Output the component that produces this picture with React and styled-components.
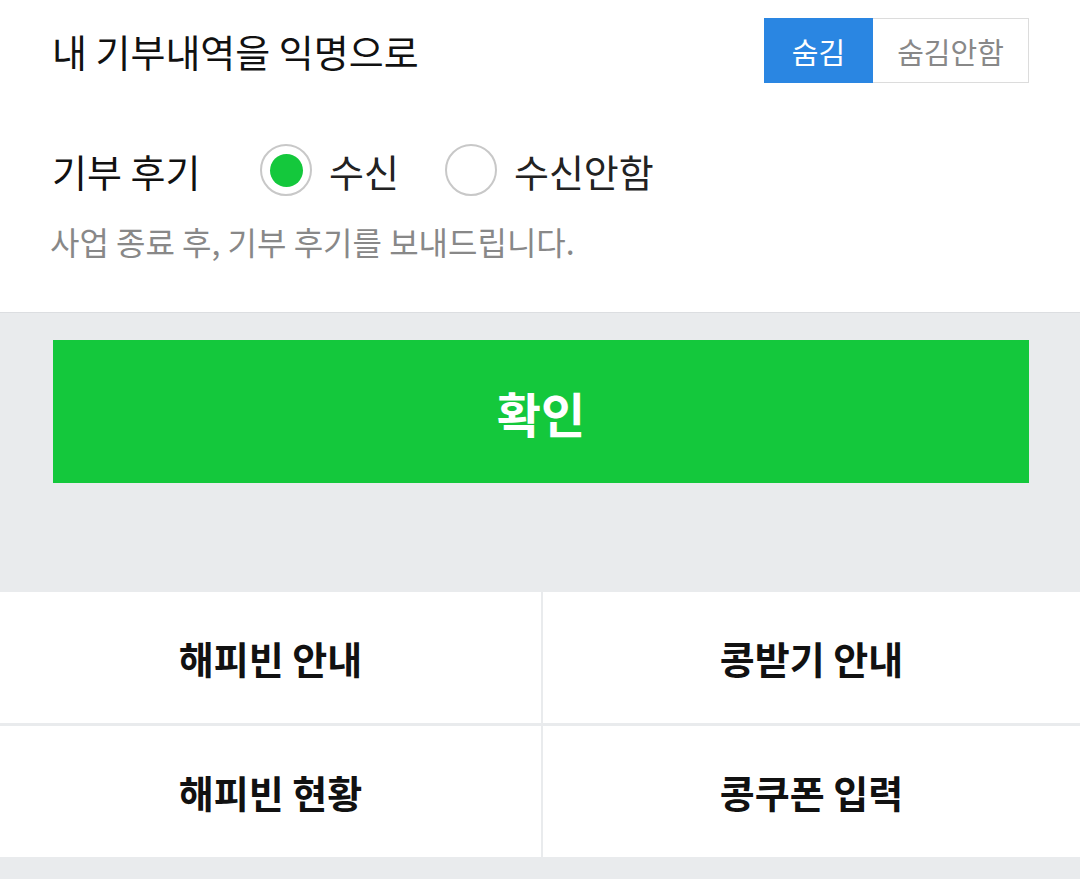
import React, { useState } from "react";
import styled, { createGlobalStyle } from "styled-components";

const GlobalStyle = createGlobalStyle`
  body {
    margin: 0;
    background: #e9ebed;
    font-family: "Noto Sans CJK KR", "Noto Sans", sans-serif;
  }
`;

function App() {
  const [hidden, setHidden] = useState(true);
  const [review, setReview] = useState(true);

  return (
    <Page>
      <GlobalStyle />
      <Settings>
        <TopRow>
          <Title>내 기부내역을 익명으로</Title>
          <Toggle>
            <ToggleButton active={hidden} onClick={() => setHidden(true)}>
              숨김
            </ToggleButton>
            <ToggleButton active={!hidden} onClick={() => setHidden(false)}>
              숨김안함
            </ToggleButton>
          </Toggle>
        </TopRow>

        <RadioRow>
          <Label>기부 후기</Label>
          <Option onClick={() => setReview(true)}>
            <Radio checked={review} />
            수신
          </Option>
          <Option onClick={() => setReview(false)}>
            <Radio checked={!review} />
            수신안함
          </Option>
        </RadioRow>
        <Hint>사업 종료 후, 기부 후기를 보내드립니다.</Hint>
      </Settings>

      <Footer>
        <Confirm>확인</Confirm>
      </Footer>

      <Menu>
        <MenuItem>해피빈 안내</MenuItem>
        <MenuItem>콩받기 안내</MenuItem>
        <MenuItem>해피빈 현황</MenuItem>
        <MenuItem>콩쿠폰 입력</MenuItem>
      </Menu>
    </Page>
  );
}

const Page = styled.div`
  width: 1080px;
  min-height: 879px;
  background: #e9ebed;
`;

const Settings = styled.section`
  background: #fff;
  padding: 18px 51px 0 52px;
  height: 294px;
  border-bottom: 1px solid #dcdee1;
`;

const TopRow = styled.div`
  display: flex;
  align-items: center;
  justify-content: space-between;
`;

const Title = styled.h2`
  margin: 0;
  font-size: 38px;
  font-weight: 400;
  color: #111;
`;

const Toggle = styled.div`
  display: flex;
  height: 65px;
`;

const ToggleButton = styled.button`
  font-family: inherit;
  font-size: 29px;
  padding: 0;
  cursor: pointer;
  border: 1px solid ${(p) => (p.active ? "#2a86e2" : "#dcdcdc")};
  background: ${(p) => (p.active ? "#2a86e2" : "#fff")};
  color: ${(p) => (p.active ? "#fff" : "#888")};
  & + & {
    border-left: none;
  }
  &:first-child {
    width: 109px;
  }
  &:last-child {
    width: 156px;
  }
`;

const RadioRow = styled.div`
  display: flex;
  align-items: center;
  margin-top: 61px;
  height: 52px;
`;

const Label = styled.span`
  font-size: 38px;
  color: #111;
  width: 208px;
`;

const Option = styled.label`
  display: flex;
  align-items: center;
  gap: 17px;
  font-size: 38px;
  color: #222;
  margin-right: 46px;
  cursor: pointer;
`;

const Radio = styled.span`
  box-sizing: border-box;
  width: 52px;
  height: 52px;
  border-radius: 50%;
  border: 2px solid #c8c8c8;
  background: #fff;
  display: flex;
  align-items: center;
  justify-content: center;
  &::after {
    content: "";
    width: 33px;
    height: 33px;
    border-radius: 50%;
    background: ${(p) => (p.checked ? "#14c83c" : "transparent")};
  }
`;

const Hint = styled.p`
  margin: 22px 0 0 -2px;
  font-size: 32px;
  color: #888;
`;

const Footer = styled.div`
  padding: 27px 51px 0 53px;
  height: 279px;
  box-sizing: border-box;
`;

const Confirm = styled.button`
  display: block;
  width: 100%;
  height: 143px;
  border: none;
  background: #14c83c;
  color: #fff;
  font-family: inherit;
  font-size: 48px;
  font-weight: 700;
  cursor: pointer;
`;

const Menu = styled.div`
  display: grid;
  grid-template-columns: 541px 1fr;
  grid-auto-rows: 131px;
  column-gap: 2px;
  row-gap: 3px;
`;

const MenuItem = styled.div`
  background: #fff;
  display: flex;
  align-items: center;
  justify-content: center;
  font-size: 38px;
  font-weight: 700;
  color: #111;
`;

export default App;
